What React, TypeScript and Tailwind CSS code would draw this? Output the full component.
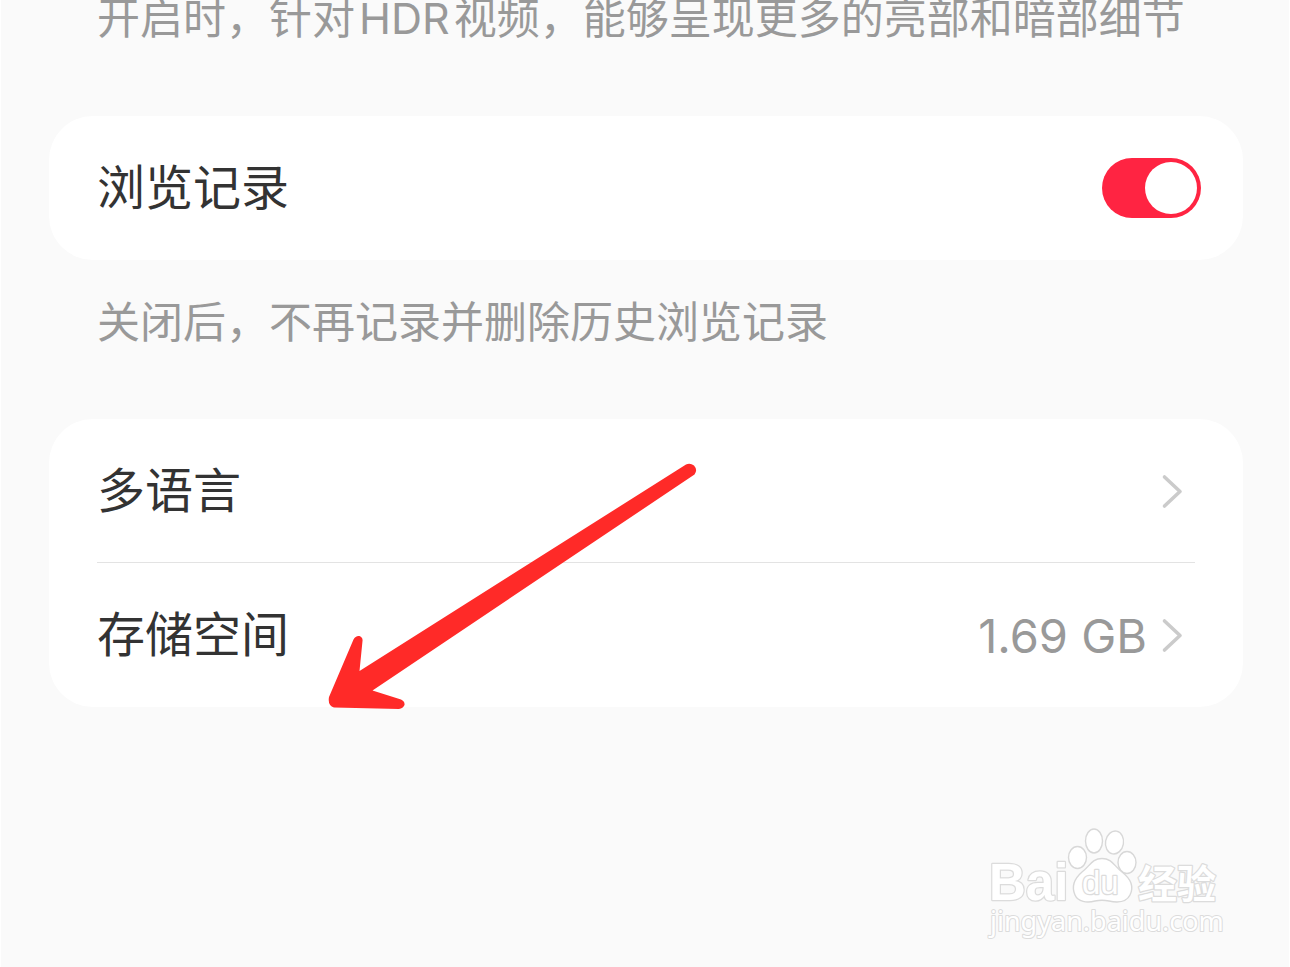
import { useState } from "react";

function Chevron() {
  return (
    <svg className="h-9 w-6 shrink-0" viewBox="0 0 24 36" fill="none" aria-hidden="true">
      <path
        d="M5.500 4 21 18.500 5.500 33"
        stroke="#cbcbcb"
        strokeWidth="3.6"
        strokeLinecap="round"
        strokeLinejoin="round"
      />
    </svg>
  );
}

function LinkRow({ label, value }: { label: string; value?: string }) {
  return (
    <button type="button" className="flex h-36 w-full items-center justify-between pr-3 text-left">
      <span className="text-[48px] leading-none text-[#333333]">{label}</span>
      <span className="flex items-center gap-3">
        {value && <span className="text-[47px] leading-none text-[#999999]">{value}</span>}
        <Chevron />
      </span>
    </button>
  );
}

function Arrow() {
  return (
    <svg
      className="pointer-events-none absolute top-[31px] left-[261px] h-[270px] w-[400px]"
      viewBox="0 0 400 270"
      aria-hidden="true"
    >
      <path
        d="M376 14.500Q380 12.500 384 15.500Q388 20 384.500 24.500L62.500 240.500L91 249.500Q95 251.500 94.500 255Q93 258.500 89 259L24 257.500Q17.500 255.500 19 247L43.500 189.500Q45.500 185.500 49.500 186Q53 187.500 52.500 191L49.500 221Z"
        fill="#ff2a28"
      />
    </svg>
  );
}

function Watermark() {
  return (
    <svg
      className="pointer-events-none absolute right-[49px] bottom-0 h-[157px] w-[270px]"
      viewBox="0 0 270 157"
      fill="#ffffff"
      stroke="#d8d8d8"
      strokeWidth="1.4"
      strokeLinejoin="round"
    >
      <ellipse cx="107.500" cy="47.500" rx="9" ry="11" />
      <ellipse cx="124" cy="31" rx="8.500" ry="12" />
      <ellipse cx="144.500" cy="32.500" rx="9" ry="11.500" transform="rotate(10 144.500 32.500)" />
      <ellipse cx="157" cy="52.500" rx="9" ry="11" />
      <path d="M132 48.500C142 48.500 144 56 152 62C161 69 164 77 160 85C156 93 146 92.500 139 91C134 90 130 90 125 91C117 93 108 92 105 85C101 76 104 69 112 62C120 56 122 48.500 132 48.500Z" />
      <g style={{ paintOrder: "stroke" }} stroke="#dcdcdc" strokeWidth="2.500">
        <text x="19" y="90" fontSize="51" fontWeight="700" className="font-['Liberation_Sans']">
          Bai
        </text>
        <text x="112" y="84" fontSize="33" fontWeight="400" className="font-['Liberation_Sans']">
          du
        </text>
        <text x="168" y="88" fontSize="39" fontWeight="700" className="font-['Noto_Sans_CJK_SC']">
          经验
        </text>
        <text x="20" y="121" fontSize="27" strokeWidth="2" className="font-['Noto_Sans']">
          jingyan.baidu.com
        </text>
      </g>
    </svg>
  );
}

export default function App() {
  const [history, setHistory] = useState(true);

  return (
    <main className="relative min-h-screen overflow-hidden border-x border-white bg-[#fafafa] pr-[46px] pl-12 font-['Inter','Noto_Sans_CJK_SC',sans-serif]">
      <p className="pl-12 text-[43px] leading-9 whitespace-nowrap text-[#999999]">
        开启时，针对<span className="mx-1">HDR</span>视频，能够呈现更多的亮部和暗部细节
      </p>

      <section className="mt-20 rounded-[44px] bg-white pr-[42px] pl-12">
        <label className="flex h-36 cursor-pointer items-center justify-between">
          <span className="text-[48px] leading-none text-[#333333]">浏览记录</span>
          <span className="relative flex">
            <input
              type="checkbox"
              role="switch"
              checked={history}
              onChange={(e) => setHistory(e.target.checked)}
              className="peer h-[60px] w-[99px] cursor-pointer appearance-none rounded-full bg-[#dddddd] checked:bg-[#ff2442]"
            />
            <span className="pointer-events-none absolute top-1 left-1 size-[52px] rounded-full bg-white peer-checked:right-1 peer-checked:left-auto" />
          </span>
        </label>
      </section>
      <p className="mt-[42px] px-12 text-[43px] leading-10 text-[#999999]">
        关闭后，不再记录并删除历史浏览记录
      </p>

      <section className="relative mt-[77px] rounded-[44px] bg-white px-12">
        <LinkRow label="多语言" />
        <hr className="-mt-px border-[#e3e3e3]" />
        <LinkRow label="存储空间" value="1.69 GB" />
        <Arrow />
      </section>

      <Watermark />
    </main>
  );
}
